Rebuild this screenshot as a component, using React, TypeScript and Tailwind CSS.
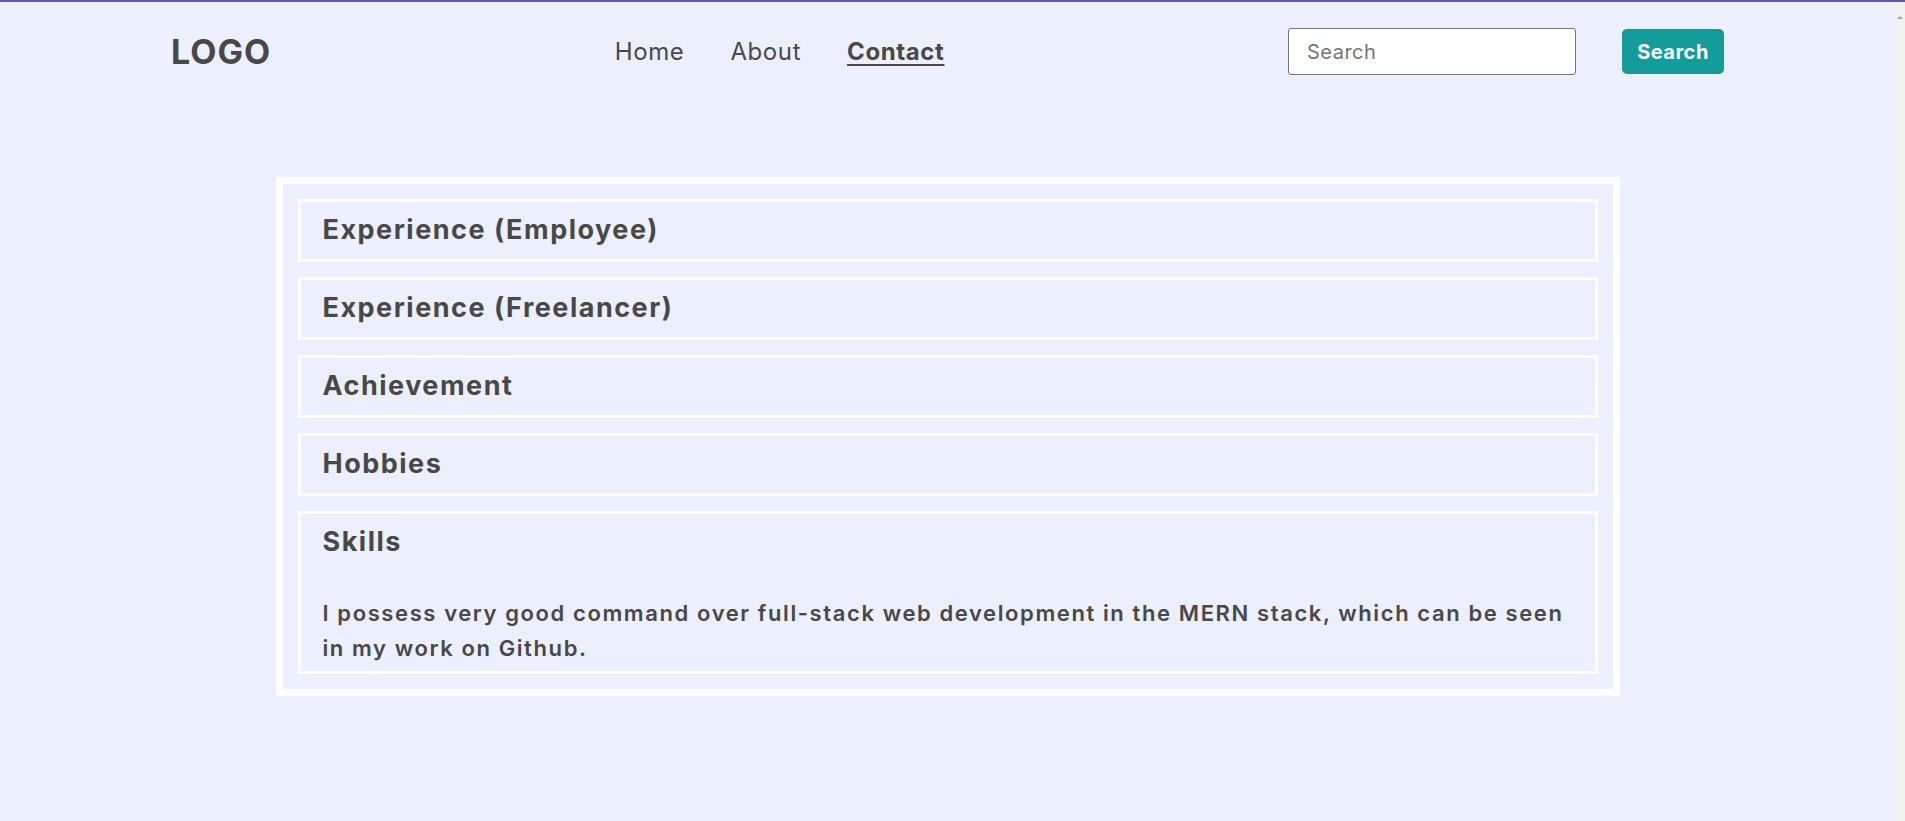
import React from "react";

const items = ["Experience (Employee)", "Experience (Freelancer)", "Achievement", "Hobbies"];

export default function App() {
  return (
    <div
      className="flex min-h-[821px] w-full bg-[#ecf0fc] text-[#484848] border-t-2 border-[#6352bd]"
      style={{ fontFamily: "Inter, 'Open Sans', sans-serif" }}
    >
      <div className="flex-1">
        <header className="h-[99px] px-[171px] flex items-center justify-between">
          <div className="text-[34px] font-bold tracking-[1px] leading-none">LOGO</div>
          <nav className="flex items-center gap-[46px] text-[24px] tracking-[0.6px]">
            <a className="cursor-pointer">Home</a>
            <a className="cursor-pointer">About</a>
            <a className="cursor-pointer font-bold underline underline-offset-[4px] decoration-2">Contact</a>
          </nav>
          <div className="flex items-center gap-[46px]">
            <input
              placeholder="Search"
              className="w-[288px] h-[47px] bg-white border border-[#767676] rounded-[3px] px-[18px] text-[20px] tracking-[0.5px] placeholder:text-[#757575] outline-none"
            />
            <button className="w-[102px] h-[45px] rounded-[5px] bg-[#129c9a] text-white font-bold text-[20px] tracking-[0.5px]">
              Search
            </button>
          </div>
        </header>
        <main className="flex justify-center pt-[76px]">
          <div className="w-[1344px] border-[7px] border-white px-[15px] pt-[15px] pb-[15px] flex flex-col gap-[15px]">
            {items.map((t) => (
              <div key={t} className="border-[3px] border-white h-[63px] flex items-center px-[22px]">
                <h2 className="text-[27px] font-bold tracking-[1.5px]">{t}</h2>
              </div>
            ))}
            <div className="border-[3px] border-white px-[22px] pb-[5px]">
              <h2 className="h-[57px] flex items-center text-[27px] font-bold tracking-[1.5px]">Skills</h2>
              <p className="mt-[25px] text-[22px] font-semibold leading-[35px] tracking-[1.6px]">
                I possess very good command over full-stack web development in the MERN stack, which can be seen in my work on Github.
              </p>
            </div>
          </div>
        </main>
      </div>
      <div className="w-[10px] bg-[#f1f1f1] flex flex-col items-center pt-[14px]">
        <div className="w-0 h-0 border-l-[3px] border-r-[3px] border-b-[3px] border-l-transparent border-r-transparent border-b-[#a3a3a3]" />
      </div>
    </div>
  );
}
